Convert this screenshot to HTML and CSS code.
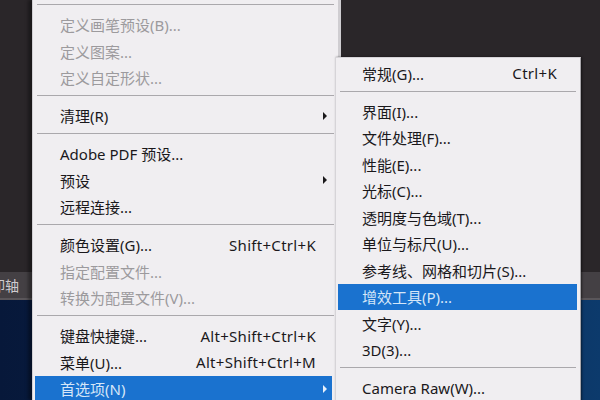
FILE: index.html
```html
<!DOCTYPE html>
<html lang="zh-CN">

<head>
    <meta charset="UTF-8">
    <title>首选项</title>
    <link rel="stylesheet" href="styles.css">
</head>

<body>
    <div class="workspace">
        <div class="workspace-top"></div>
        <div class="timeline-bar">
            <span class="timeline-label">卸轴</span>
        </div>
        <div class="workspace-canvas"></div>
    </div>

    <div class="menu main-menu">
        <div class="separator"></div>
        <div class="item disabled"><span class="label">定义画笔预设(B)...</span></div>
        <div class="item disabled"><span class="label">定义图案...</span></div>
        <div class="item disabled"><span class="label">定义自定形状...</span></div>
        <div class="separator"></div>
        <div class="item"><span class="label">清理(R)</span><span class="arrow"></span></div>
        <div class="separator"></div>
        <div class="item"><span class="label">Adobe PDF 预设...</span></div>
        <div class="item"><span class="label">预设</span><span class="arrow"></span></div>
        <div class="item"><span class="label">远程连接...</span></div>
        <div class="separator"></div>
        <div class="item"><span class="label">颜色设置(G)...</span><span class="shortcut">Shift+Ctrl+K</span></div>
        <div class="item disabled"><span class="label">指定配置文件...</span></div>
        <div class="item disabled"><span class="label">转换为配置文件(V)...</span></div>
        <div class="separator"></div>
        <div class="item"><span class="label">键盘快捷键...</span><span class="shortcut">Alt+Shift+Ctrl+K</span></div>
        <div class="item"><span class="label">菜单(U)...</span><span class="shortcut">Alt+Shift+Ctrl+M</span></div>
        <div class="item active"><span class="label">首选项(N)</span><span class="arrow"></span></div>
    </div>

    <div class="menu sub-menu">
        <div class="item"><span class="label">常规(G)...</span><span class="shortcut">Ctrl+K</span></div>
        <div class="separator"></div>
        <div class="item"><span class="label">界面(I)...</span></div>
        <div class="item"><span class="label">文件处理(F)...</span></div>
        <div class="item"><span class="label">性能(E)...</span></div>
        <div class="item"><span class="label">光标(C)...</span></div>
        <div class="item"><span class="label">透明度与色域(T)...</span></div>
        <div class="item"><span class="label">单位与标尺(U)...</span></div>
        <div class="item"><span class="label">参考线、网格和切片(S)...</span></div>
        <div class="item active"><span class="label">增效工具(P)...</span></div>
        <div class="item"><span class="label">文字(Y)...</span></div>
        <div class="item"><span class="label">3D(3)...</span></div>
        <div class="separator"></div>
        <div class="item"><span class="label">Camera Raw(W)...</span></div>
    </div>
</body>

</html>
```

FILE: styles.css
```css
body {
    margin: 0;
    width: 600px;
    height: 400px;
    overflow: hidden;
    position: relative;
    font-family: "Noto Sans", "Noto Sans CJK SC", sans-serif;
    font-size: 15px;
    background-color: #2a2629;
}

.workspace {
    display: grid;
    grid-template-rows: 272px 28px 1fr;
    height: 400px;
}

.workspace-top {
    background-color: #2a2629;
}

.timeline-bar {
    background-color: #444044;
    border-bottom: 2px solid #5a565a;
    display: flex;
    align-items: center;
    overflow: hidden;
}

.timeline-label {
    margin-left: -9px;
    color: #cfcbcf;
    font-size: 14px;
}

.workspace-canvas {
    background: linear-gradient(90deg, #07183a 0, #0a2448 50%, #0c3a6c 100%);
}

/* menus float over the workspace */
.menu {
    position: absolute;
    background-color: #f0eef1;
    color: #1a181b;
}

.main-menu {
    left: 32px;
    top: 0;
    width: 305px;
    height: 400px;
    border-left: 1px solid #d2d0d4;
    border-right: 3px solid #cfcdd1;
    box-shadow: -4px 0 3px rgba(0, 0, 0, 0.35);
}

.sub-menu {
    left: 335px;
    top: 57px;
    width: 244px;
    height: 343px;
    padding-top: 2px;
    border: 1px solid #d6d4d8;
    border-right-color: #a9a7ab;
    box-shadow: 1px 0 2px rgba(0, 0, 0, 0.5);
}

.item {
    display: flex;
    align-items: center;
    height: 26.5px;
    white-space: nowrap;
}

.main-menu .item {
    margin: 0 6px 0 2px;
    padding-left: 25px;
}

.sub-menu .item {
    margin: 0 3px 0 2px;
    padding: 0 20px 0 24px;
}

.label {
    flex: 1;
}

.main-menu .shortcut {
    margin-right: 16px;
    letter-spacing: 0.3px;
}

.sub-menu .shortcut {
    letter-spacing: 0.3px;
}

.arrow {
    width: 0;
    height: 0;
    margin-right: 5px;
    border-top: 4px solid transparent;
    border-bottom: 4px solid transparent;
    border-left: 4px solid #1a181b;
}

.disabled {
    color: #9c9a9d;
}

.active {
    background-color: #1a72cf;
    color: #d5e6f8;
}

.active .arrow {
    border-left-color: #e6f0fb;
}

.separator {
    height: 1px;
    margin: 4px 4px 6.5px;
    background-color: #aaa8ac;
}
```
